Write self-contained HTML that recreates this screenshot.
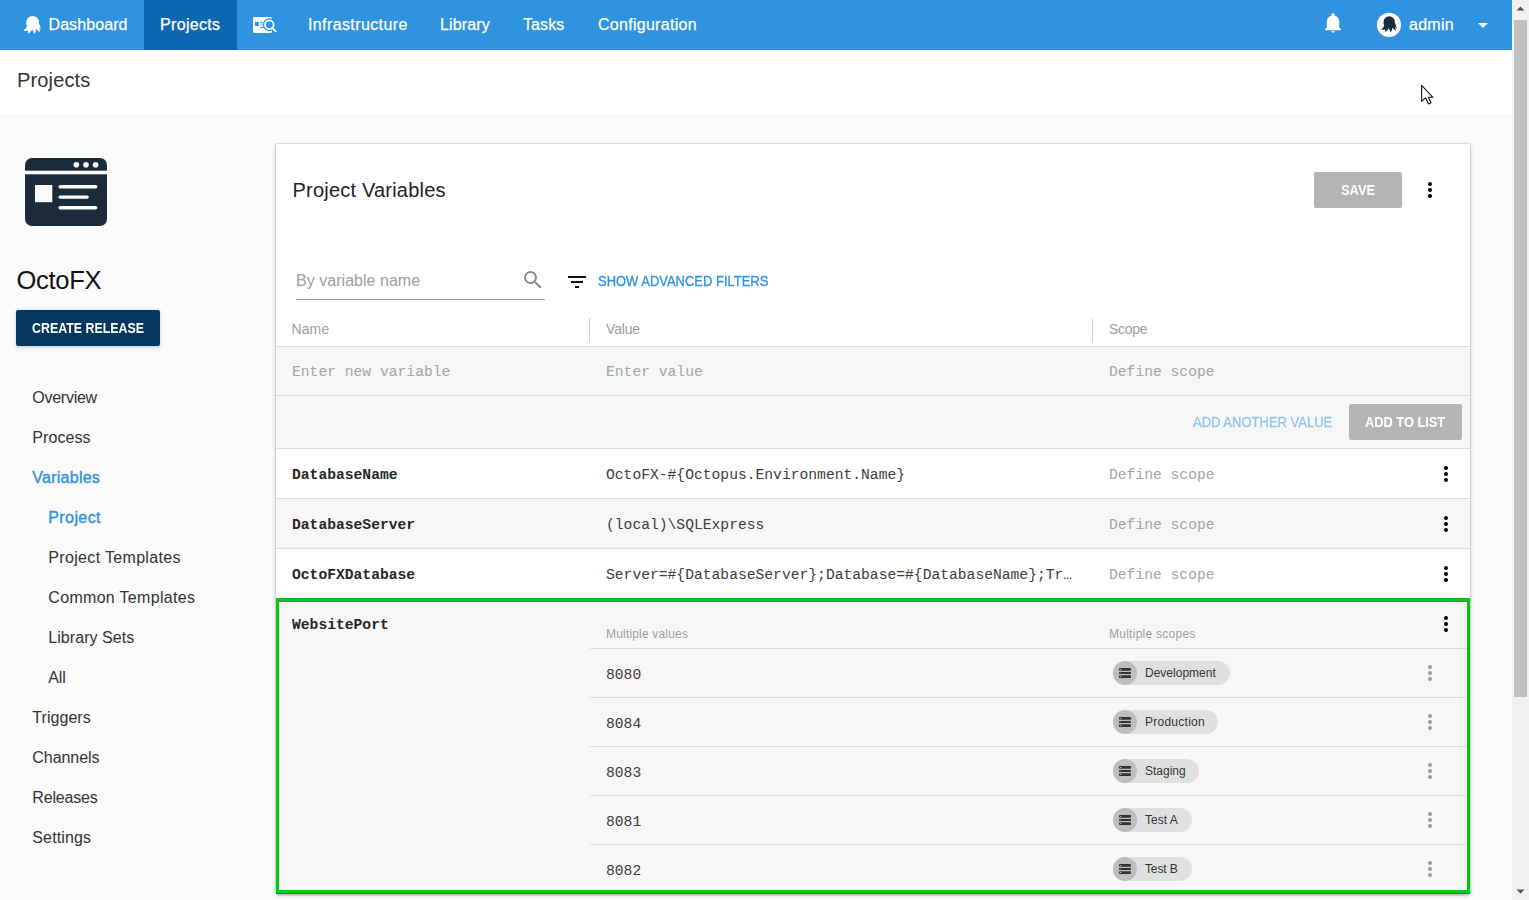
<!DOCTYPE html>
<html><head><meta charset="utf-8"><title>OctoFX Variables</title>
<style>
html,body{margin:0;padding:0;overflow:hidden;}
body{width:1529px;height:900px;overflow:hidden;background:#fafafa;position:relative;font-family:'Liberation Sans', sans-serif;}
.t{position:absolute;white-space:nowrap;line-height:20px;}
.r{position:absolute;}
.chip{position:absolute;height:24px;border-radius:12px;background:#e0e0e0;display:flex;align-items:center;padding-right:12px;}
.chip .av{width:24px;height:24px;border-radius:50%;background:#bdbdbd;display:block;}
.chip .av svg{display:block}
.chip .ct{font-size:12px;color:#333;margin-left:8px;line-height:24px;font-family:'Liberation Sans', sans-serif;}
</style></head><body>
<div class="r" style="left:0px;top:0px;width:1512px;height:50px;background:#2f93e0;"></div>
<div class="r" style="left:144px;top:0px;width:93px;height:50px;background:#0c67b3;"></div>
<svg class="r" style="left:0;top:0" width="1529" height="60" viewBox="0 0 1529 60"><g fill="#fff" transform="translate(32.6 22.3) scale(0.64)"><circle cx="0" cy="0" r="10"/>
<path d="M-9.9 1.5 C-9.2 4.5 -8.6 6.5 -8.6 9.5 L8.6 9.5 C8.6 6.5 9.2 4.5 9.9 1.5 Z"/>
<path d="M-8.6 5.5 Q-9.5 10.2 -14.2 12.8 Q-7.8 15.4 -3 10.5 Z"/>
<path d="M-7 8.5 Q-6.8 13 -7.6 17.6 Q-2.2 15.8 -0.3 9.5 Z"/>
<path d="M-2.5 9 Q1.4 13.6 2.6 18.6 Q6.2 14 5.6 8.5 Z"/>
<path d="M3 8.5 Q8 11.8 11.2 15.9 Q12 10 8.8 5.5 Z"/>
<path d="M6.5 4 Q10 8 12.8 12.2 Q12.6 6 9.8 1.5 Z"/></g></svg>
<div class="t" style="left:48.5px;top:15.46px;font-size:16px;color:#fff;font-weight:normal;font-family:'Liberation Sans', sans-serif;letter-spacing:0.085px;-webkit-text-stroke:0.25px #fff;">Dashboard</div>
<div class="t" style="left:160px;top:15.46px;font-size:16px;color:#fff;font-weight:normal;font-family:'Liberation Sans', sans-serif;letter-spacing:0.328px;-webkit-text-stroke:0.25px #fff;">Projects</div>
<svg class="r" style="left:252px;top:16px" width="26" height="18" viewBox="0 0 26 18">
<rect x="1" y="1" width="19" height="16" rx="1.6" fill="#fff"/>
<rect x="3" y="5.9" width="3.8" height="4.1" fill="#2f93e0"/>
<rect x="8" y="6.1" width="3.5" height="1" fill="#2f93e0"/>
<rect x="8" y="8.4" width="3" height="1.1" fill="#2f93e0" opacity=".55"/>
<rect x="8" y="11" width="4" height="1" fill="#2f93e0"/>
<circle cx="17.3" cy="8.7" r="6.4" fill="#2f93e0"/>
<circle cx="17.3" cy="8.7" r="4.3" fill="none" stroke="#fff" stroke-width="1.75"/>
<path d="M20.3 11.8 L23.7 15.4" stroke="#fff" stroke-width="1.8" stroke-linecap="round"/>
</svg>
<div class="t" style="left:308px;top:15.46px;font-size:16px;color:#fff;font-weight:normal;font-family:'Liberation Sans', sans-serif;letter-spacing:0.387px;-webkit-text-stroke:0.25px #fff;">Infrastructure</div>
<div class="t" style="left:440px;top:15.46px;font-size:16px;color:#fff;font-weight:normal;font-family:'Liberation Sans', sans-serif;letter-spacing:0.124px;-webkit-text-stroke:0.25px #fff;">Library</div>
<div class="t" style="left:523px;top:15.46px;font-size:16px;color:#fff;font-weight:normal;font-family:'Liberation Sans', sans-serif;letter-spacing:0.110px;-webkit-text-stroke:0.25px #fff;">Tasks</div>
<div class="t" style="left:598px;top:15.46px;font-size:16px;color:#fff;font-weight:normal;font-family:'Liberation Sans', sans-serif;letter-spacing:0.282px;-webkit-text-stroke:0.25px #fff;">Configuration</div>
<svg class="r" style="left:1323px;top:12px" width="20" height="22" viewBox="0 0 20 22">
<path fill="#fff" d="M10 20.6c1.1 0 1.9-.6 1.9-1.4H8.1c0 .8.8 1.4 1.9 1.4zM16.2 15.6V10c0-3-1.6-5.5-4.4-6.2v-.7C11.8 2 11 1.3 10 1.3S8.2 2 8.2 3.1v.7C5.4 4.5 3.8 7 3.8 10v5.6L2 17.4v.9h16v-.9l-1.8-1.8z"/>
</svg>
<svg class="r" style="left:1376px;top:12px" width="26" height="26" viewBox="0 0 26 26"><circle cx="13" cy="12.9" r="12.1" fill="#fff"/></svg>
<svg class="r" style="left:0;top:0" width="1529" height="60" viewBox="0 0 1529 60"><g fill="#1b2b3a" transform="translate(1389.2 22) scale(0.5700000000000001)"><circle cx="0" cy="0" r="10"/>
<path d="M-9.9 1.5 C-9.2 4.5 -8.6 6.5 -8.6 9.5 L8.6 9.5 C8.6 6.5 9.2 4.5 9.9 1.5 Z"/>
<path d="M-8.6 5.5 Q-9.5 10.2 -14.2 12.8 Q-7.8 15.4 -3 10.5 Z"/>
<path d="M-7 8.5 Q-6.8 13 -7.6 17.6 Q-2.2 15.8 -0.3 9.5 Z"/>
<path d="M-2.5 9 Q1.4 13.6 2.6 18.6 Q6.2 14 5.6 8.5 Z"/>
<path d="M3 8.5 Q8 11.8 11.2 15.9 Q12 10 8.8 5.5 Z"/>
<path d="M6.5 4 Q10 8 12.8 12.2 Q12.6 6 9.8 1.5 Z"/></g></svg>
<div class="t" style="left:1409px;top:15.46px;font-size:16px;color:#fff;font-weight:normal;font-family:'Liberation Sans', sans-serif;letter-spacing:0.286px;-webkit-text-stroke:0.25px #fff;">admin</div>
<svg class="r" style="left:1477px;top:22px" width="12" height="7" viewBox="0 0 12 7"><path d="M1 1h10L6 6z" fill="#fff"/></svg>
<div class="r" style="left:1512px;top:0px;width:17px;height:900px;background:#f1f1f1;"></div>
<div class="r" style="left:1514px;top:20px;width:13px;height:677px;background:#c1c1c1;"></div>
<svg class="r" style="left:1512px;top:0px" width="17" height="17" viewBox="0 0 17 17"><path d="M4.5 10.5h8L8.5 6.5z" fill="#505050"/></svg>
<svg class="r" style="left:1512px;top:883px" width="17" height="17" viewBox="0 0 17 17"><path d="M4.5 6.5h8l-4 4z" fill="#505050"/></svg>
<div class="r" style="left:0px;top:50px;width:1512px;height:64px;background:#ffffff;"></div>
<div class="t" style="left:17px;top:69.67px;font-size:20px;color:#333;font-weight:normal;font-family:'Liberation Sans', sans-serif;letter-spacing:0.146px;">Projects</div>
<svg class="r" style="left:25px;top:157px" width="83" height="70" viewBox="0 0 83 70">
<rect x="0" y="0.9" width="82" height="68.1" rx="7" fill="#1b2b3a"/>
<rect x="0" y="13.7" width="82" height="3.6" fill="#fafafa"/>
<circle cx="51.3" cy="7.7" r="2.8" fill="#fafafa"/>
<circle cx="61" cy="7.7" r="2.8" fill="#fafafa"/>
<circle cx="70.6" cy="7.7" r="2.8" fill="#fafafa"/>
<rect x="10" y="28" width="17.3" height="17.2" fill="#fafafa"/>
<rect x="33.4" y="28" width="39" height="3.4" rx="1.7" fill="#fafafa"/>
<rect x="33.4" y="38.4" width="30.5" height="3.4" rx="1.7" fill="#fafafa"/>
<rect x="33.4" y="49.1" width="39" height="3.4" rx="1.7" fill="#fafafa"/>
</svg>
<div class="t" style="left:16.5px;top:270.16px;font-size:25.5px;color:#111;font-weight:normal;font-family:'Liberation Sans', sans-serif;letter-spacing:-0.278px;">OctoFX</div>
<div class="r" style="left:16px;top:310px;width:144px;height:36px;background:#04385f;border-radius:2px;box-shadow:0 1px 4px rgba(0,0,0,.2);"></div>
<div class="t" style="left:32px;top:318.15px;font-size:14px;color:#fff;font-weight:bold;font-family:'Liberation Sans', sans-serif;transform:scaleX(0.8851);transform-origin:0 0;">CREATE RELEASE</div>
<div class="t" style="left:32.3px;top:388.46px;font-size:16px;color:#333333;font-weight:normal;font-family:'Liberation Sans', sans-serif;letter-spacing:-0.266px;">Overview</div>
<div class="t" style="left:32.3px;top:428.46px;font-size:16px;color:#333333;font-weight:normal;font-family:'Liberation Sans', sans-serif;letter-spacing:0.083px;">Process</div>
<div class="t" style="left:32.3px;top:468.46px;font-size:16px;color:#2f93e0;font-weight:normal;font-family:'Liberation Sans', sans-serif;letter-spacing:0.254px;-webkit-text-stroke:0.4px #2f93e0;">Variables</div>
<div class="t" style="left:48.3px;top:508.46px;font-size:16px;color:#2f93e0;font-weight:normal;font-family:'Liberation Sans', sans-serif;letter-spacing:0.406px;-webkit-text-stroke:0.4px #2f93e0;">Project</div>
<div class="t" style="left:48.3px;top:548.46px;font-size:16px;color:#333333;font-weight:normal;font-family:'Liberation Sans', sans-serif;letter-spacing:0.333px;">Project Templates</div>
<div class="t" style="left:48.3px;top:588.46px;font-size:16px;color:#333333;font-weight:normal;font-family:'Liberation Sans', sans-serif;letter-spacing:0.314px;">Common Templates</div>
<div class="t" style="left:48.3px;top:628.46px;font-size:16px;color:#333333;font-weight:normal;font-family:'Liberation Sans', sans-serif;letter-spacing:0.057px;">Library Sets</div>
<div class="t" style="left:48.3px;top:668.46px;font-size:16px;color:#333333;font-weight:normal;font-family:'Liberation Sans', sans-serif;letter-spacing:-0.140px;">All</div>
<div class="t" style="left:32.3px;top:708.46px;font-size:16px;color:#333333;font-weight:normal;font-family:'Liberation Sans', sans-serif;letter-spacing:0.051px;">Triggers</div>
<div class="t" style="left:32.3px;top:748.46px;font-size:16px;color:#333333;font-weight:normal;font-family:'Liberation Sans', sans-serif;letter-spacing:-0.058px;">Channels</div>
<div class="t" style="left:32.3px;top:788.46px;font-size:16px;color:#333333;font-weight:normal;font-family:'Liberation Sans', sans-serif;letter-spacing:-0.173px;">Releases</div>
<div class="t" style="left:32.3px;top:828.46px;font-size:16px;color:#333333;font-weight:normal;font-family:'Liberation Sans', sans-serif;letter-spacing:0.142px;">Settings</div>
<div class="r" style="left:276px;top:144px;width:1194px;height:749px;background:#fff;box-shadow:0 0 0 1px rgba(0,0,0,.07), 0 1px 4px rgba(0,0,0,.26);"></div>
<div class="t" style="left:292.5px;top:179.57px;font-size:20px;color:#222;font-weight:normal;font-family:'Liberation Sans', sans-serif;letter-spacing:0.205px;">Project Variables</div>
<div class="r" style="left:1314px;top:172px;width:88px;height:36px;background:#b5b5b5;border-radius:2px;"></div>
<div class="t" style="left:1341px;top:180.15px;font-size:14px;color:#fff;font-weight:bold;font-family:'Liberation Sans', sans-serif;transform:scaleX(0.9215);transform-origin:0 0;">SAVE</div>
<div class="r" style="left:1428.0px;top:182.0px;width:4px;height:4px;border-radius:50%;background:#000"></div>
<div class="r" style="left:1428.0px;top:188.0px;width:4px;height:4px;border-radius:50%;background:#000"></div>
<div class="r" style="left:1428.0px;top:194.0px;width:4px;height:4px;border-radius:50%;background:#000"></div>
<div class="t" style="left:296px;top:271.46px;font-size:16px;color:#a0a0a0;font-weight:normal;font-family:'Liberation Sans', sans-serif;letter-spacing:0.034px;">By variable name</div>
<div class="r" style="left:296px;top:299px;width:249px;height:1px;background:#9e9e9e;"></div>
<svg class="r" style="left:520.5px;top:268px" width="24" height="24" viewBox="0 0 24 24">
<path fill="#8a8a8a" d="M15.5 14h-.79l-.28-.27A6.47 6.47 0 0 0 16 9.5 6.5 6.5 0 1 0 9.5 16c1.61 0 3.09-.59 4.23-1.57l.27.28v.79l5 4.99L20.49 19l-4.99-5zm-6 0C7.01 14 5 11.99 5 9.5S7.01 5 9.5 5 14 7.01 14 9.5 11.99 14 9.5 14z"/>
</svg>
<div class="r" style="left:568px;top:276px;width:18px;height:2px;background:#111;"></div>
<div class="r" style="left:571px;top:281px;width:12px;height:2px;background:#111;"></div>
<div class="r" style="left:575px;top:286px;width:4px;height:2px;background:#111;"></div>
<div class="t" style="left:598px;top:271.15px;font-size:14px;color:#2f93e0;font-weight:normal;font-family:'Liberation Sans', sans-serif;transform:scaleX(0.9268);transform-origin:0 0;-webkit-text-stroke:0.3px #2f93e0;">SHOW ADVANCED FILTERS</div>
<div class="t" style="left:291.5px;top:319.15px;font-size:14px;color:#9e9e9e;font-weight:normal;font-family:'Liberation Sans', sans-serif;letter-spacing:0.109px;">Name</div>
<div class="r" style="left:589px;top:318px;width:1px;height:24px;background:#d0d0d0;"></div>
<div class="t" style="left:606px;top:319.15px;font-size:14px;color:#9e9e9e;font-weight:normal;font-family:'Liberation Sans', sans-serif;letter-spacing:-0.171px;">Value</div>
<div class="r" style="left:1092px;top:318px;width:1px;height:24px;background:#d0d0d0;"></div>
<div class="t" style="left:1109px;top:319.15px;font-size:14px;color:#9e9e9e;font-weight:normal;font-family:'Liberation Sans', sans-serif;letter-spacing:-0.284px;">Scope</div>
<div class="r" style="left:276px;top:346px;width:1194px;height:1px;background:#dcdcdc;"></div>
<div class="r" style="left:276px;top:347px;width:1194px;height:48px;background:#f7f7f7;"></div>
<div class="t" style="left:292px;top:362.10px;font-size:14.67px;color:#a4a4a4;font-weight:normal;font-family:'Liberation Mono', monospace;">Enter new variable</div>
<div class="t" style="left:606px;top:362.10px;font-size:14.67px;color:#a4a4a4;font-weight:normal;font-family:'Liberation Mono', monospace;">Enter value</div>
<div class="t" style="left:1109px;top:362.10px;font-size:14.67px;color:#a4a4a4;font-weight:normal;font-family:'Liberation Mono', monospace;">Define scope</div>
<div class="r" style="left:276px;top:395px;width:1194px;height:1px;background:#dcdcdc;"></div>
<div class="r" style="left:276px;top:396px;width:1194px;height:52px;background:#f7f7f7;"></div>
<div class="t" style="left:1193px;top:412.15px;font-size:14px;color:#92c4ea;font-weight:normal;font-family:'Liberation Sans', sans-serif;transform:scaleX(0.9293);transform-origin:0 0;-webkit-text-stroke:0.3px #92c4ea;">ADD ANOTHER VALUE</div>
<div class="r" style="left:1349px;top:404px;width:113px;height:36px;background:#b5b5b5;border-radius:2px;"></div>
<div class="t" style="left:1365px;top:412.15px;font-size:14px;color:#fff;font-weight:bold;font-family:'Liberation Sans', sans-serif;transform:scaleX(0.9147);transform-origin:0 0;">ADD TO LIST</div>
<div class="r" style="left:276px;top:448px;width:1194px;height:1px;background:#dcdcdc;"></div>
<div class="r" style="left:276px;top:449px;width:1194px;height:49px;background:#fff;"></div>
<div class="r" style="left:276px;top:498px;width:1194px;height:1px;background:#dcdcdc;"></div>
<div class="t" style="left:292px;top:465.10px;font-size:14.67px;color:#262626;font-weight:bold;font-family:'Liberation Mono', monospace;">DatabaseName</div>
<div class="t" style="left:606px;top:465.10px;font-size:14.67px;color:#3c3c3c;font-weight:normal;font-family:'Liberation Mono', monospace;">OctoFX-#{Octopus.Environment.Name}</div>
<div class="t" style="left:1109px;top:465.10px;font-size:14.67px;color:#a4a4a4;font-weight:normal;font-family:'Liberation Mono', monospace;">Define scope</div>
<div class="r" style="left:1444.0px;top:466.0px;width:4px;height:4px;border-radius:50%;background:#000"></div>
<div class="r" style="left:1444.0px;top:472.0px;width:4px;height:4px;border-radius:50%;background:#000"></div>
<div class="r" style="left:1444.0px;top:478.0px;width:4px;height:4px;border-radius:50%;background:#000"></div>
<div class="r" style="left:276px;top:499px;width:1194px;height:49px;background:#f7f7f7;"></div>
<div class="r" style="left:276px;top:548px;width:1194px;height:1px;background:#dcdcdc;"></div>
<div class="t" style="left:292px;top:515.10px;font-size:14.67px;color:#262626;font-weight:bold;font-family:'Liberation Mono', monospace;">DatabaseServer</div>
<div class="t" style="left:606px;top:515.10px;font-size:14.67px;color:#3c3c3c;font-weight:normal;font-family:'Liberation Mono', monospace;">(local)\SQLExpress</div>
<div class="t" style="left:1109px;top:515.10px;font-size:14.67px;color:#a4a4a4;font-weight:normal;font-family:'Liberation Mono', monospace;">Define scope</div>
<div class="r" style="left:1444.0px;top:516.0px;width:4px;height:4px;border-radius:50%;background:#000"></div>
<div class="r" style="left:1444.0px;top:522.0px;width:4px;height:4px;border-radius:50%;background:#000"></div>
<div class="r" style="left:1444.0px;top:528.0px;width:4px;height:4px;border-radius:50%;background:#000"></div>
<div class="r" style="left:276px;top:549px;width:1194px;height:49px;background:#fff;"></div>
<div class="r" style="left:276px;top:598px;width:1194px;height:1px;background:#dcdcdc;"></div>
<div class="t" style="left:292px;top:565.10px;font-size:14.67px;color:#262626;font-weight:bold;font-family:'Liberation Mono', monospace;">OctoFXDatabase</div>
<div class="t" style="left:606px;top:565.10px;font-size:14.67px;color:#3c3c3c;font-weight:normal;font-family:'Liberation Mono', monospace;">Server=#{DatabaseServer};Database=#{DatabaseName};Tr…</div>
<div class="t" style="left:1109px;top:565.10px;font-size:14.67px;color:#a4a4a4;font-weight:normal;font-family:'Liberation Mono', monospace;">Define scope</div>
<div class="r" style="left:1444.0px;top:566.0px;width:4px;height:4px;border-radius:50%;background:#000"></div>
<div class="r" style="left:1444.0px;top:572.0px;width:4px;height:4px;border-radius:50%;background:#000"></div>
<div class="r" style="left:1444.0px;top:578.0px;width:4px;height:4px;border-radius:50%;background:#000"></div>
<div class="r" style="left:276px;top:598px;width:1194px;height:295px;background:#f7f7f7;"></div>
<div class="t" style="left:292px;top:615.10px;font-size:14.67px;color:#262626;font-weight:bold;font-family:'Liberation Mono', monospace;">WebsitePort</div>
<div class="r" style="left:1444.0px;top:616.0px;width:4px;height:4px;border-radius:50%;background:#000"></div>
<div class="r" style="left:1444.0px;top:622.0px;width:4px;height:4px;border-radius:50%;background:#000"></div>
<div class="r" style="left:1444.0px;top:628.0px;width:4px;height:4px;border-radius:50%;background:#000"></div>
<div class="t" style="left:606px;top:623.84px;font-size:12px;color:#9e9e9e;font-weight:normal;font-family:'Liberation Sans', sans-serif;letter-spacing:0.182px;">Multiple values</div>
<div class="t" style="left:1109px;top:623.84px;font-size:12px;color:#9e9e9e;font-weight:normal;font-family:'Liberation Sans', sans-serif;letter-spacing:0.258px;">Multiple scopes</div>
<div class="r" style="left:590px;top:648px;width:877px;height:1px;background:#dcdcdc;"></div>
<div class="t" style="left:606px;top:665.10px;font-size:14.67px;color:#3c3c3c;font-weight:normal;font-family:'Liberation Mono', monospace;">8080</div>
<div class="r" style="left:1428.0px;top:665.0px;width:4px;height:4px;border-radius:50%;background:#9a9a9a"></div>
<div class="r" style="left:1428.0px;top:671.0px;width:4px;height:4px;border-radius:50%;background:#9a9a9a"></div>
<div class="r" style="left:1428.0px;top:677.0px;width:4px;height:4px;border-radius:50%;background:#9a9a9a"></div>
<div class="r" style="left:1113px;top:661px;width:117px;height:24px;background:#e0e0e0;border-radius:12px;"></div>
<svg class="r" style="left:1113px;top:661px" width="24" height="24" viewBox="0 0 24 24"><circle cx="12" cy="12" r="12" fill="#bdbdbd"/><rect x="6" y="7" width="12" height="2.7" rx="0.9" fill="#333"/><rect x="6" y="11" width="12" height="1.9" rx="0.6" fill="#333"/><rect x="6" y="14.2" width="12" height="2.8" rx="0.9" fill="#333"/><rect x="7" y="8" width="1.3" height=".8" fill="#ddd"/><rect x="7" y="11.6" width="1" height=".7" fill="#999"/><rect x="7" y="15.2" width="1.3" height=".8" fill="#ddd"/></svg>
<div class="t" style="left:1145px;top:662.84px;font-size:12px;color:#333;font-weight:normal;font-family:'Liberation Sans', sans-serif;letter-spacing:0.007px;">Development</div>
<div class="r" style="left:590px;top:697px;width:877px;height:1px;background:#dcdcdc;"></div>
<div class="t" style="left:606px;top:714.10px;font-size:14.67px;color:#3c3c3c;font-weight:normal;font-family:'Liberation Mono', monospace;">8084</div>
<div class="r" style="left:1428.0px;top:714.0px;width:4px;height:4px;border-radius:50%;background:#9a9a9a"></div>
<div class="r" style="left:1428.0px;top:720.0px;width:4px;height:4px;border-radius:50%;background:#9a9a9a"></div>
<div class="r" style="left:1428.0px;top:726.0px;width:4px;height:4px;border-radius:50%;background:#9a9a9a"></div>
<div class="r" style="left:1113px;top:710px;width:105px;height:24px;background:#e0e0e0;border-radius:12px;"></div>
<svg class="r" style="left:1113px;top:710px" width="24" height="24" viewBox="0 0 24 24"><circle cx="12" cy="12" r="12" fill="#bdbdbd"/><rect x="6" y="7" width="12" height="2.7" rx="0.9" fill="#333"/><rect x="6" y="11" width="12" height="1.9" rx="0.6" fill="#333"/><rect x="6" y="14.2" width="12" height="2.8" rx="0.9" fill="#333"/><rect x="7" y="8" width="1.3" height=".8" fill="#ddd"/><rect x="7" y="11.6" width="1" height=".7" fill="#999"/><rect x="7" y="15.2" width="1.3" height=".8" fill="#ddd"/></svg>
<div class="t" style="left:1145px;top:711.84px;font-size:12px;color:#333;font-weight:normal;font-family:'Liberation Sans', sans-serif;letter-spacing:0.255px;">Production</div>
<div class="r" style="left:590px;top:746px;width:877px;height:1px;background:#dcdcdc;"></div>
<div class="t" style="left:606px;top:763.10px;font-size:14.67px;color:#3c3c3c;font-weight:normal;font-family:'Liberation Mono', monospace;">8083</div>
<div class="r" style="left:1428.0px;top:763.0px;width:4px;height:4px;border-radius:50%;background:#9a9a9a"></div>
<div class="r" style="left:1428.0px;top:769.0px;width:4px;height:4px;border-radius:50%;background:#9a9a9a"></div>
<div class="r" style="left:1428.0px;top:775.0px;width:4px;height:4px;border-radius:50%;background:#9a9a9a"></div>
<div class="r" style="left:1113px;top:759px;width:86px;height:24px;background:#e0e0e0;border-radius:12px;"></div>
<svg class="r" style="left:1113px;top:759px" width="24" height="24" viewBox="0 0 24 24"><circle cx="12" cy="12" r="12" fill="#bdbdbd"/><rect x="6" y="7" width="12" height="2.7" rx="0.9" fill="#333"/><rect x="6" y="11" width="12" height="1.9" rx="0.6" fill="#333"/><rect x="6" y="14.2" width="12" height="2.8" rx="0.9" fill="#333"/><rect x="7" y="8" width="1.3" height=".8" fill="#ddd"/><rect x="7" y="11.6" width="1" height=".7" fill="#999"/><rect x="7" y="15.2" width="1.3" height=".8" fill="#ddd"/></svg>
<div class="t" style="left:1145px;top:760.84px;font-size:12px;color:#333;font-weight:normal;font-family:'Liberation Sans', sans-serif;letter-spacing:0.004px;">Staging</div>
<div class="r" style="left:590px;top:795px;width:877px;height:1px;background:#dcdcdc;"></div>
<div class="t" style="left:606px;top:812.10px;font-size:14.67px;color:#3c3c3c;font-weight:normal;font-family:'Liberation Mono', monospace;">8081</div>
<div class="r" style="left:1428.0px;top:812.0px;width:4px;height:4px;border-radius:50%;background:#9a9a9a"></div>
<div class="r" style="left:1428.0px;top:818.0px;width:4px;height:4px;border-radius:50%;background:#9a9a9a"></div>
<div class="r" style="left:1428.0px;top:824.0px;width:4px;height:4px;border-radius:50%;background:#9a9a9a"></div>
<div class="r" style="left:1113px;top:808px;width:79px;height:24px;background:#e0e0e0;border-radius:12px;"></div>
<svg class="r" style="left:1113px;top:808px" width="24" height="24" viewBox="0 0 24 24"><circle cx="12" cy="12" r="12" fill="#bdbdbd"/><rect x="6" y="7" width="12" height="2.7" rx="0.9" fill="#333"/><rect x="6" y="11" width="12" height="1.9" rx="0.6" fill="#333"/><rect x="6" y="14.2" width="12" height="2.8" rx="0.9" fill="#333"/><rect x="7" y="8" width="1.3" height=".8" fill="#ddd"/><rect x="7" y="11.6" width="1" height=".7" fill="#999"/><rect x="7" y="15.2" width="1.3" height=".8" fill="#ddd"/></svg>
<div class="t" style="left:1145px;top:809.84px;font-size:12px;color:#333;font-weight:normal;font-family:'Liberation Sans', sans-serif;letter-spacing:0.002px;">Test A</div>
<div class="r" style="left:590px;top:844px;width:877px;height:1px;background:#dcdcdc;"></div>
<div class="t" style="left:606px;top:861.10px;font-size:14.67px;color:#3c3c3c;font-weight:normal;font-family:'Liberation Mono', monospace;">8082</div>
<div class="r" style="left:1428.0px;top:861.0px;width:4px;height:4px;border-radius:50%;background:#9a9a9a"></div>
<div class="r" style="left:1428.0px;top:867.0px;width:4px;height:4px;border-radius:50%;background:#9a9a9a"></div>
<div class="r" style="left:1428.0px;top:873.0px;width:4px;height:4px;border-radius:50%;background:#9a9a9a"></div>
<div class="r" style="left:1113px;top:857px;width:79px;height:24px;background:#e0e0e0;border-radius:12px;"></div>
<svg class="r" style="left:1113px;top:857px" width="24" height="24" viewBox="0 0 24 24"><circle cx="12" cy="12" r="12" fill="#bdbdbd"/><rect x="6" y="7" width="12" height="2.7" rx="0.9" fill="#333"/><rect x="6" y="11" width="12" height="1.9" rx="0.6" fill="#333"/><rect x="6" y="14.2" width="12" height="2.8" rx="0.9" fill="#333"/><rect x="7" y="8" width="1.3" height=".8" fill="#ddd"/><rect x="7" y="11.6" width="1" height=".7" fill="#999"/><rect x="7" y="15.2" width="1.3" height=".8" fill="#ddd"/></svg>
<div class="t" style="left:1145px;top:858.84px;font-size:12px;color:#333;font-weight:normal;font-family:'Liberation Sans', sans-serif;letter-spacing:-0.129px;">Test B</div>
<div class="r" style="left:276px;top:598px;width:1194px;height:295px;background:transparent;box-sizing:border-box;border:3px solid #00c814;filter:drop-shadow(0 1px 0.6px rgba(0,0,0,.55));"></div>
<div class="r" style="left:277px;top:894px;width:1192px;height:1px;background:rgba(0,0,0,0.14);"></div>
<div class="r" style="left:277px;top:895px;width:1192px;height:1px;background:rgba(0,0,0,0.12);"></div>
<div class="r" style="left:277px;top:896px;width:1192px;height:1px;background:rgba(0,0,0,0.045);"></div>
<div class="r" style="left:277px;top:897px;width:1192px;height:1px;background:rgba(0,0,0,0.012);"></div>
<svg class="r" style="left:1418px;top:82px" width="20" height="26" viewBox="0 0 20 26">
<path d="M3.6 3.4 L3.6 19.4 L7.6 15.8 L10.6 21.9 L13 20.8 L10.3 15.3 L14.9 15.3 Z" fill="#fff" stroke="#111" stroke-width="1.1" stroke-linejoin="round"/>
</svg>
</body></html>
